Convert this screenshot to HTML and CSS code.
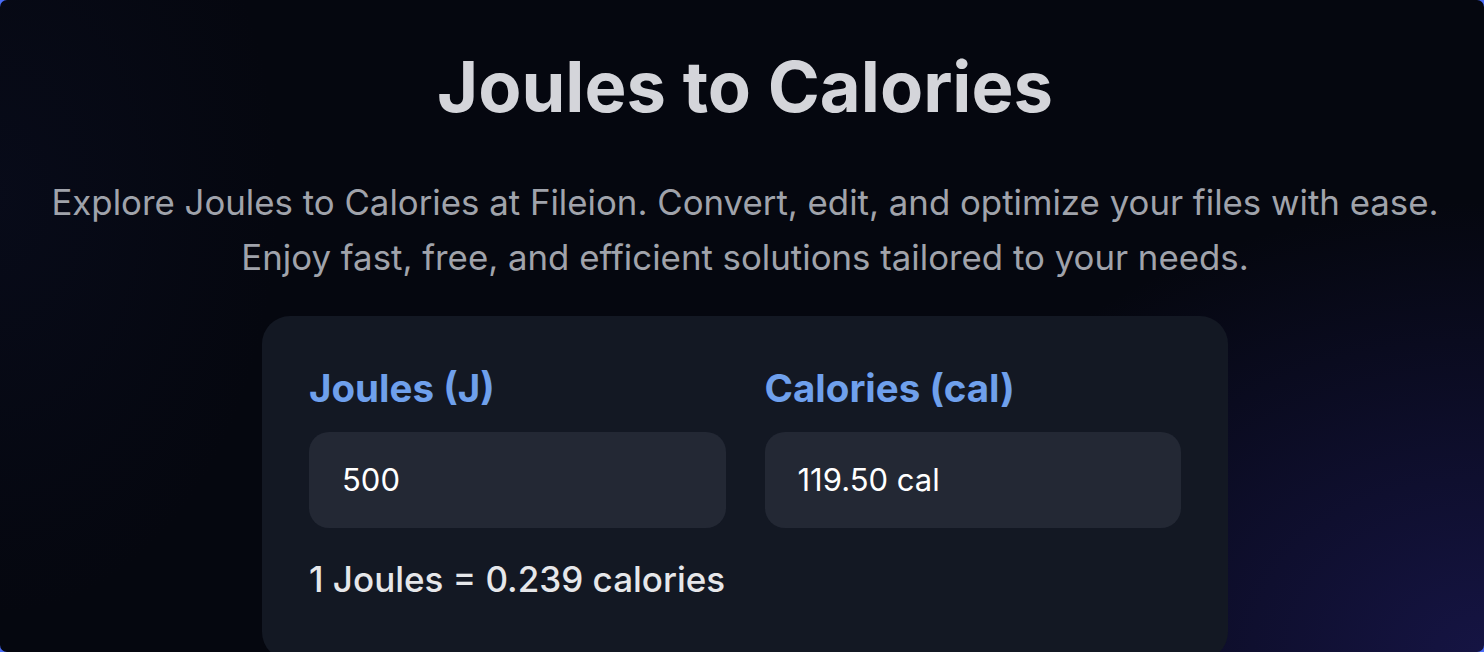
FILE: index.html
```html
<!DOCTYPE html>
<html lang="en">
<head>
  <meta charset="UTF-8">
  <meta name="viewport" content="width=device-width, initial-scale=1.0">
  <title>Joules to Calories</title>
  <link rel="stylesheet" href="styles.css">
</head>
<body>
  <div class="page">
    <h1>Joules to Calories</h1>
    <p class="intro">Explore Joules to Calories at Fileion. Convert, edit, and optimize your files with ease.<br>Enjoy fast, free, and efficient solutions tailored to your needs.</p>

    <div class="converter">
      <div class="fields">
        <div class="field">
          <label for="joules">Joules (J)</label>
          <input type="text" id="joules" value="500">
        </div>
        <div class="field">
          <label for="calories">Calories (cal)</label>
          <input type="text" id="calories" value="119.50 cal" readonly>
        </div>
      </div>
      <p class="rate">1 Joules = 0.239 calories</p>
    </div>
  </div>
</body>
</html>
```

FILE: styles.css
```css
/* General Styles */
html, body {
  height: 100%;
}

body {
  margin: 0;
  font-family: Inter, "Noto Sans", sans-serif;
  background-color: #4a6cf7;
  overflow: hidden;
}

.page {
  height: 100%;
  box-sizing: border-box;
  padding: 44px 0 0 6px;
  border-radius: 7px;
  background-color: #05070f;
  background-image:
    radial-gradient(ellipse 800px 600px at 100% 100%, rgba(30, 27, 95, 0.65), rgba(30, 27, 95, 0) 75%),
    radial-gradient(ellipse 400px 600px at 0% 30%, rgba(20, 28, 70, 0.18), rgba(20, 28, 70, 0) 70%);
  text-align: center;
}

h1 {
  margin: 0;
  font-size: 70.5px;
  font-weight: 700;
  line-height: 1.21;
  color: #d4d5da;
}

.intro {
  margin: 46px 0 0;
  font-size: 34.8px;
  line-height: 55px;
  color: #a0a3ab;
}

/* Converter card */
.converter {
  width: 966px;
  margin: 31px auto 0;
  padding: 49px 47px 60px;
  box-sizing: border-box;
  background-color: #131823;
  border-radius: 28px;
  text-align: left;
}

.fields {
  display: grid;
  grid-template-columns: 1fr 1fr;
  gap: 39px;
}

label {
  display: block;
  font-size: 38.5px;
  font-weight: 700;
  line-height: 1.21;
  color: #6fa0ec;
  margin-bottom: 20px;
}

input {
  display: block;
  width: 100%;
  height: 96px;
  box-sizing: border-box;
  padding: 0 33px;
  border: none;
  border-radius: 20px;
  background-color: #232834;
  font-family: inherit;
  font-size: 31px;
  color: #ffffff;
  outline: none;
}

.rate {
  margin: 30px 0 0;
  font-size: 35px;
  font-weight: 500;
  line-height: 1.21;
  color: #e6e7ea;
}
```
